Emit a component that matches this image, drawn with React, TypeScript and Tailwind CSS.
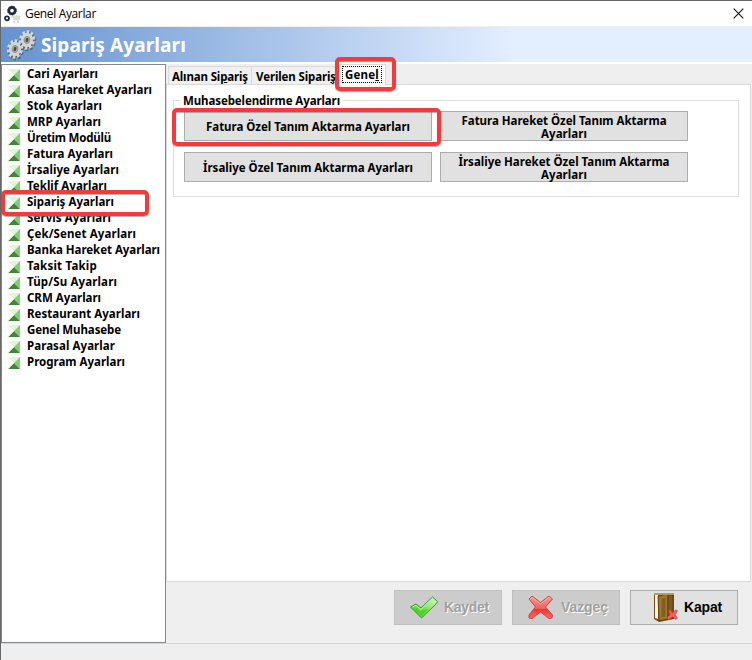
import { useLayoutEffect, useRef, type ReactNode } from "react";

// Spreads the letters so that the label takes exactly `w` pixels.
function Fit({ w, className = "", children }: { w: number; className?: string; children: ReactNode }) {
  const ref = useRef<HTMLSpanElement>(null);
  useLayoutEffect(() => {
    const el = ref.current;
    if (!el) return;
    el.style.letterSpacing = "0px";
    const n = (el.textContent || "").length;
    const gap = (w - el.getBoundingClientRect().width) / n;
    el.style.letterSpacing = `${gap}px`;
  }, [w]);
  return (
    <span ref={ref} className={`inline-block whitespace-nowrap ${className}`}>
      {children}
    </span>
  );
}

const items: [string, number][] = [
  ["Cari Ayarları", 71],
  ["Kasa Hareket Ayarları", 125],
  ["Stok Ayarları", 75],
  ["MRP Ayarları", 74],
  ["Üretim Modülü", 84],
  ["Fatura Ayarları", 86],
  ["İrsaliye Ayarları", 92],
  ["Teklif Ayarları", 80],
  ["Sipariş Ayarları", 87],
  ["Servis Ayarları", 84],
  ["Çek/Senet Ayarları", 109],
  ["Banka Hareket Ayarları", 133],
  ["Taksit Takip", 70],
  ["Tüp/Su Ayarları", 90],
  ["CRM Ayarları", 74],
  ["Restaurant Ayarları", 113],
  ["Genel Muhasebe", 94],
  ["Parasal Ayarlar", 88],
  ["Program Ayarları", 98],
];

function ItemIcon() {
  return (
    <svg width="12" height="12" viewBox="0 0 12 12" className="mt-[3px] shrink-0">
      <path d="M0 0H12L6 6Z" fill="#def6d5" />
      <path d="M12 0V12L6 6Z" fill="#83cb77" />
      <path d="M0 12L6 6L12 12Z" fill="#44843f" />
      <path d="M0 0V12L6 6Z" fill="#f8fcf6" />
    </svg>
  );
}

function Gear({ cx, cy }: { cx: number; cy: number }) {
  return (
    <g transform={`translate(${cx} ${cy}) rotate(12) scale(.92 1.12)`}>
      <circle r="7.2" fill="none" stroke="#59636b" strokeWidth="3.4" strokeDasharray="2.6 1.92" transform="translate(1 1)" />
      <circle r="5.2" fill="none" stroke="#59636b" strokeWidth="3" transform="translate(.9 .9)" />
      <circle r="7.2" fill="none" stroke="#d5d8d7" strokeWidth="3" strokeDasharray="2.6 1.92" />
      <circle r="4.9" fill="#a9adad" stroke="#d2d5d3" strokeWidth="3.2" />
      <circle r="3.1" fill="#b2b6b5" stroke="#858b8d" strokeWidth=".8" />
      <ellipse rx="1.6" ry="2" fill="#4d4b4a" />
    </g>
  );
}

function PushButton({ lines }: { lines: [string, number][] }) {
  return (
    <button className="flex h-[30px] w-[248px] flex-col items-center justify-center border border-[#adadad] bg-[#e1e1e1] pt-px leading-[13px]">
      {lines.map(([t, w]) => (
        <Fit key={t} w={w}>{t}</Fit>
      ))}
    </button>
  );
}

export default function App() {
  return (
    <div className="relative flex h-[660px] w-[752px] flex-col overflow-hidden border-l border-t border-[#666] bg-[#efefef] font-['Noto_Sans','DejaVu_Sans',sans-serif] text-[11.5px] font-bold text-black">
      <header className="flex h-[25px] shrink-0 items-center bg-white font-['Open_Sans','Noto_Sans',sans-serif] text-[12px] font-normal">
        <svg width="18" height="18" viewBox="0 0 18 18" className="ml-[2px]">
          <circle cx="9" cy="5.6" r="3.2" fill="none" stroke="#1b2b42" strokeWidth="2.7" />
          <circle cx="9" cy="5.6" r="4.5" fill="none" stroke="#1b2b42" strokeWidth=".8" strokeDasharray="1.5 1.3" />
          <circle cx="4" cy="13.3" r="2" fill="none" stroke="#1b2b42" strokeWidth="1.8" />
          <path d="M8 12H10L11 15H16L17 11H10" fill="#dedede" stroke="#cfcfcf" strokeWidth=".8" />
          <path d="M10 17H12M14 17H16" stroke="#bbb" strokeWidth="1.2" />
        </svg>
        <Fit w={71} className="ml-[4px] leading-[18px]">Genel Ayarlar</Fit>
        <svg width="11" height="11" viewBox="0 0 11 11" className="ml-auto mr-[8px]">
          <path d="M.7 .7L10.3 10.3M10.3 .7L.7 10.3" stroke="#111" strokeWidth="1.1" />
        </svg>
      </header>

      <div className="mt-px flex h-[35px] shrink-0 items-center bg-linear-to-r from-[#6593cf] from-0% to-[#e3eeff] to-[68%] text-[19px] text-white">
        <svg width="32" height="34" viewBox="0 0 32 34" className="ml-[5px]">
          <Gear cx={21} cy={12} />
          <Gear cx={9} cy={21} />
        </svg>
        <Fit w={145} className="ml-[3px] leading-6">Sipariş Ayarları</Fit>
      </div>

      <div className="h-[2px] shrink-0 bg-white" />

      <div className="flex h-[579px] shrink-0">
        <nav className="w-[165px] shrink-0 border border-[#828790] bg-white pt-px">
          {items.map(([t, w]) => (
            <div key={t} className="flex h-4 pl-[6px]">
              <ItemIcon />
              <Fit w={w} className="ml-[7px] leading-4">{t}</Fit>
            </div>
          ))}
        </nav>

        <main className="flex min-w-0 flex-1 flex-col">
          <div className="flex h-[20px] items-end pl-[2px]">
            <div className="h-[18px] w-[84px] border-l border-r border-t border-[#dadada] bg-[#f0f0f0] pl-[3px] leading-[19px]">
              <Fit w={76}>Alınan Si<u>p</u>ariş</Fit>
            </div>
            <div className="h-[18px] w-[87px] border-t border-[#dadada] bg-[#f0f0f0] pl-1 leading-[19px]">
              <Fit w={80}>Verilen Sipari<u>ş</u></Fit>
            </div>
            <div className="z-10 -ml-px -mb-px flex h-[21px] w-[48px] justify-center border border-b-0 border-[#dadada] bg-white pt-px">
              <div className="h-[17px] w-[40px] border border-dotted border-black text-center leading-[15px]">
                <Fit w={34}>Gene<u>l</u></Fit>
              </div>
            </div>
          </div>

          <section className="mr-px h-[498px] border border-[#dadada] bg-white">
            <div className="ml-[6px] mt-[15px] h-[97px] w-[566px] border border-[#dcdcdc]">
              <div className="-mt-[8px] ml-[6px] flex h-4 w-[163px] bg-white pl-[3px] leading-4">
                <Fit w={157}>Muhasebelendirme Ayarları</Fit>
              </div>
              <div className="ml-[10px] mt-[2px] grid w-[504px] grid-cols-2 gap-x-2 gap-y-[11px]">
                <PushButton lines={[["Fatura Özel Tanım Aktarma Ayarları", 204]]} />
                <PushButton lines={[["Fatura Hareket Özel Tanım Aktarma", 205], ["Ayarları", 46]]} />
                <PushButton lines={[["İrsaliye Özel Tanım Aktarma Ayarları", 210]]} />
                <PushButton lines={[["İrsaliye Hareket Özel Tanım Aktarma", 211], ["Ayarları", 46]]} />
              </div>
            </div>
          </section>

          <div className="mt-2 flex justify-end gap-[10px] pr-[14px] font-['Liberation_Sans',Arial,sans-serif] text-[14px]">
            <button className="flex h-[35px] w-[108px] items-center border border-[#bfbfbf] bg-[#ccc] pl-[15px] text-[#a0a0a0] [text-shadow:1px_1px_0_#fff]">
              <svg width="29" height="24" viewBox="0 0 29 24">
                <defs>
                  <linearGradient id="ok" x1="0" y1="1" x2="1" y2="0">
                    <stop offset="0" stopColor="#3dcc18" /><stop offset=".45" stopColor="#75e440" /><stop offset="1" stopColor="#e4f9e7" />
                  </linearGradient>
                </defs>
                <path d="M.5 11L6 8L11 12L22.5 1L27.5 5.5L26 8L11.5 22Z" fill="url(#ok)" stroke="#35943b" strokeLinejoin="round" />
                <path d="M3 13L11.5 20L19 12.5L10 15L7 12Z" fill="#3ed31c" opacity=".7" />
                <path d="M2.5 11L6 9.3L11 13.4L22.3 2.5L25 5" fill="none" stroke="#c1f3b3" />
              </svg>
              <Fit w={45} className="ml-[5px]">Kaydet</Fit>
            </button>
            <button className="flex h-[35px] w-[108px] items-center border border-[#bfbfbf] bg-[#ccc] pl-[15px] text-[#a0a0a0] [text-shadow:1px_1px_0_#fff]">
              <svg width="26" height="25" viewBox="0 0 26 25">
                <defs>
                  <linearGradient id="no" x1="0" y1="0" x2="0" y2="1">
                    <stop offset="0" stopColor="#ff9a92" /><stop offset=".55" stopColor="#f56060" /><stop offset=".6" stopColor="#f43534" /><stop offset="1" stopColor="#ff6b62" />
                  </linearGradient>
                </defs>
                <path d="M4 1L12.5 7.5L21 1L24.5 4L17.5 12L24.5 20L24 23L21 23.5L12.5 17L4 23.5L1 23L1 20L7.5 12L1 4Z" fill="url(#no)" stroke="#c84643" strokeLinejoin="round" />
                <path d="M2.5 4L4 2.3L12.5 9L21 2.3L22.8 4" fill="none" stroke="#ffb5ae" opacity=".8" />
              </svg>
              <Fit w={47} className="ml-[7px]">Vazgeç</Fit>
            </button>
            <button className="flex h-[35px] w-[108px] items-center border border-[#adadad] bg-[#e1e1e1] pl-[22px]">
              <svg width="25" height="31" viewBox="0 0 25 31">
                <path d="M1 1.5L21 1V27L6 30L1 27Z" fill="#745018" />
                <path d="M2 3H5V27L2 26Z" fill="#f7f2e5" />
                <path d="M5 4L15 2V27L6 29Z" fill="#98702a" stroke="#593b0c" strokeWidth=".8" />
                <path d="M8 6L13 5V25L8 26Z" fill="#81601f" stroke="#a98543" strokeWidth=".7" />
                <path d="M15 3H20V26H15Z" fill="#7d5a1e" stroke="#563509" strokeWidth=".7" />
                <path d="M1 1H21V3H1Z" fill="#b89a61" />
                <path d="M15.5 18.5L17 18L19.5 21L22.5 18L24.4 18.7L22 23L24.5 26L23 27.5L19.5 24.8L16 27.5L14 26L17.3 22.5Z" fill="#f56061" stroke="#db3b3b" strokeWidth=".7" />
              </svg>
              <Fit w={38} className="ml-[6px]">Kapat</Fit>
            </button>
          </div>
        </main>
      </div>
      <footer className="flex-1 border-t border-[#d7d7d7]" />

      {/* Highlight frames laid over the window */}
      <div className="absolute left-0 top-[189px] z-20 h-[26px] w-[148px] rounded-[5px] border-4 border-[#f43b3b] shadow-[0_1px_1px_#7779,inset_0_1px_1px_#7779]" />
      <div className="absolute left-[334px] top-[56px] z-20 h-[34px] w-[61px] rounded-[5px] border-4 border-[#f43b3b] shadow-[0_1px_1px_#7779,inset_0_1px_1px_#7779]" />
      <div className="absolute left-[171px] top-[107px] z-20 h-[38px] w-[269px] rounded-[5px] border-4 border-[#f43b3b] shadow-[0_1px_1px_#7779,inset_0_1px_1px_#7779]" />
    </div>
  );
}
